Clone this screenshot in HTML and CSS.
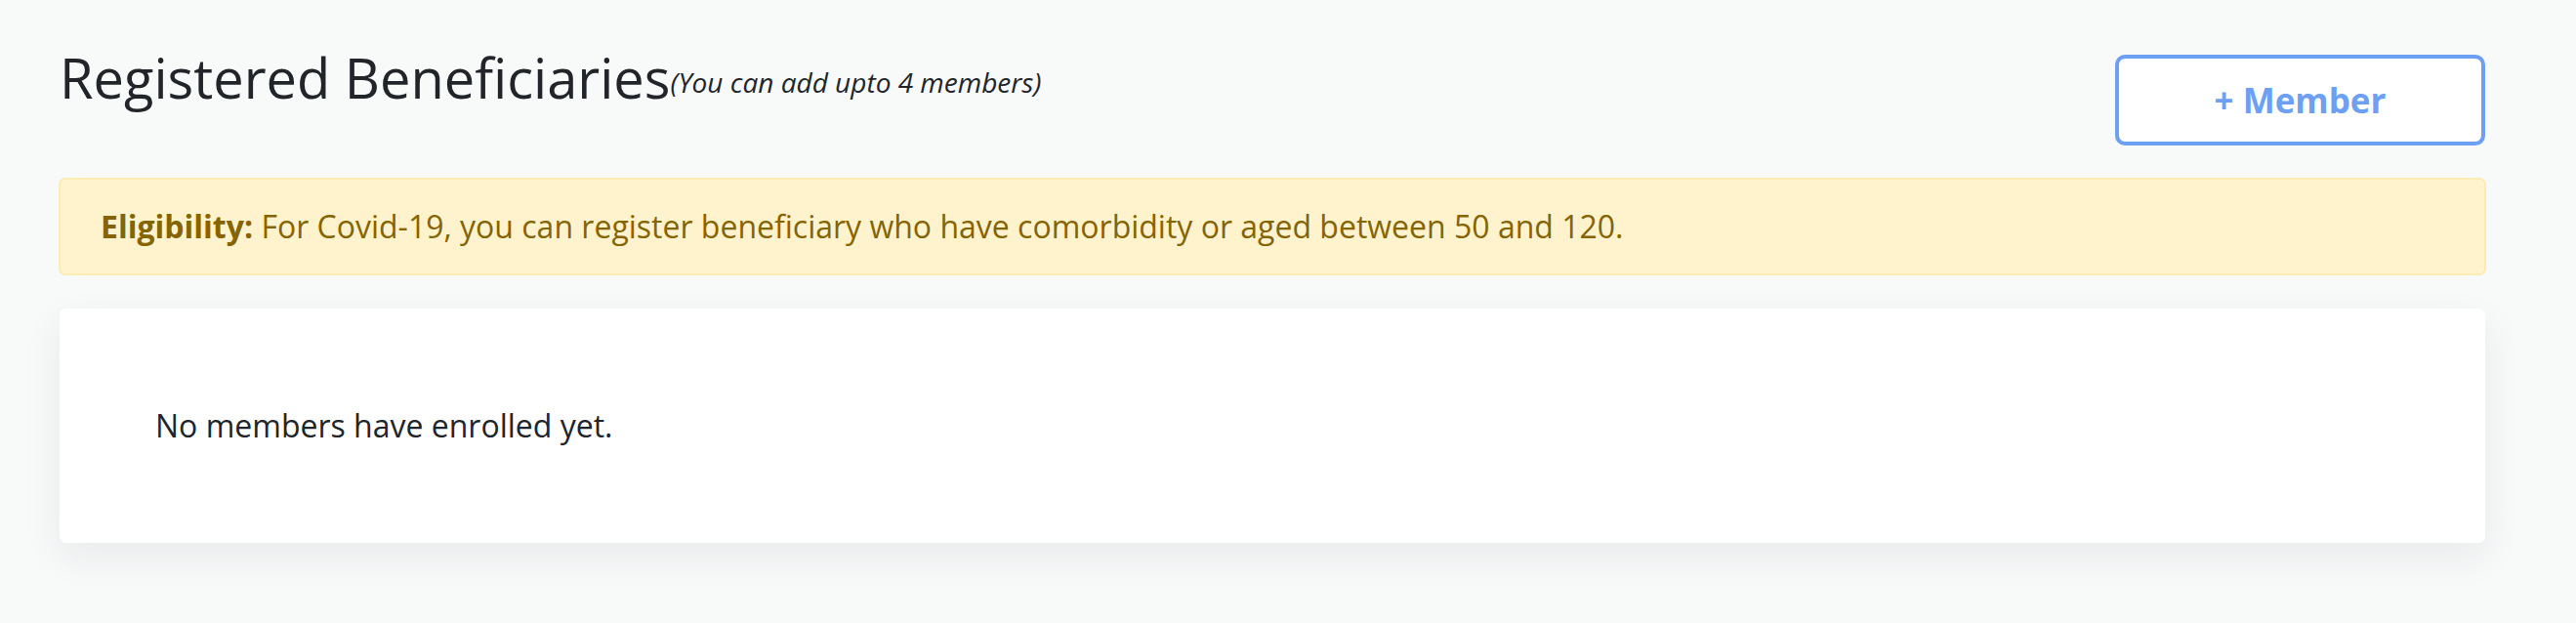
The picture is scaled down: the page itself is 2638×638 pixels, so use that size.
FILE: index.html
```html
<!DOCTYPE html>
<html lang="en">
<head>
<meta charset="utf-8">
<title>Registered Beneficiaries</title>
<link rel="stylesheet" href="styles.css">
</head>
<body>
<main class="page">
  <header class="header">
    <h1 class="title">Registered Beneficiaries<span class="subtitle">(You can add upto 4 members)</span></h1>
    <button class="btn-member" type="button">+ Member</button>
  </header>
  <div class="alert"><strong>Eligibility:</strong> For Covid-19, you can register beneficiary who have comorbidity or aged between 50 and 120.</div>
  <section class="card">
    <p class="empty">No members have enrolled yet.</p>
  </section>
</main>
</body>
</html>
```
FILE: styles.css
```css
html, body {
  margin: 0;
  padding: 0;
}
body {
  background: #f8f9f9;
  font-family: "Open Sans", "Liberation Sans", sans-serif;
  color: #212529;
  width: 2638px;
  height: 638px;
  overflow: hidden;
}
.page {
  padding: 46px 92px 0 60px;
}
.header {
  display: flex;
  justify-content: space-between;
  align-items: flex-start;
  margin-bottom: 33px;
}
.title {
  margin: 0 0 0 1px;
  font-size: 56px;
  font-weight: 400;
  line-height: 67px;
  color: #212529;
}
.subtitle {
  font-size: 28px;
  font-style: italic;
  line-height: 34px;
  vertical-align: 6px;
}
.btn-member {
  margin-top: 10px;
  margin-right: 1px;
  box-sizing: border-box;
  width: 379px;
  height: 93px;
  border: 4px solid #6d9ff3;
  border-radius: 10px;
  background: #ffffff;
  color: #6d9ff3;
  font-family: "Open Sans", "Liberation Sans", sans-serif;
  font-size: 35px;
  font-weight: 700;
  padding: 0;
  cursor: pointer;
}
.alert {
  box-sizing: border-box;
  height: 100px;
  padding: 24px 41px;
  background: #fff3cd;
  border: 2px solid #fdecb2;
  border-radius: 7px;
  color: #856404;
  font-size: 32px;
  line-height: 48px;
  margin-bottom: 34px;
}
.alert strong {
  font-weight: 700;
}
.card {
  margin: 0 1px 0 1px;
  background: #ffffff;
  border-radius: 7px;
  box-shadow: 0 14px 40px rgba(30, 40, 60, 0.07);
  padding: 96px 98px;
}
.empty {
  margin: 0;
  font-size: 32px;
  line-height: 48px;
  color: #212529;
}
```
